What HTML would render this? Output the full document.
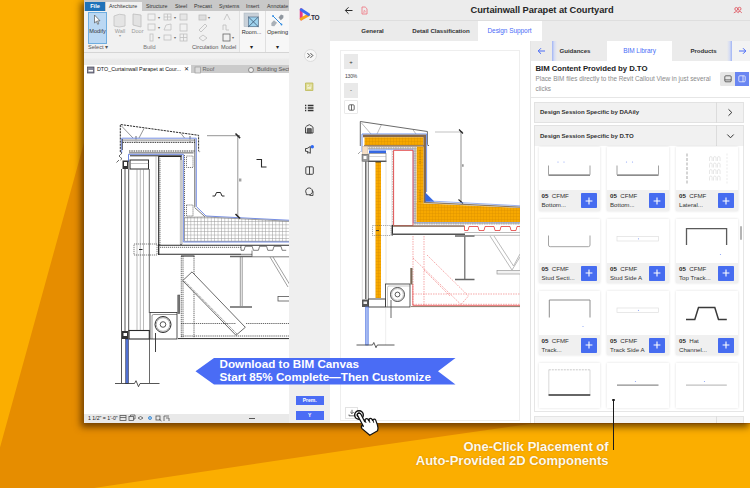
<!DOCTYPE html>
<html><head><meta charset="utf-8">
<style>
*{box-sizing:border-box;margin:0;padding:0}
html,body{width:750px;height:488px;overflow:hidden}
body{position:relative;background:#fbae00;font-family:"Liberation Sans",sans-serif;color:#222}
#bg{position:absolute;left:0;top:0}
#shot{position:absolute;left:84px;top:0;width:666px;height:423px;background:#fff;box-shadow:-2px 3px 7px 1px rgba(70,35,0,.75);overflow:hidden}
#pg{position:absolute;left:-84px;top:0;width:750px;height:423px}
#pg div,#pg svg,#pg span{position:absolute}
.t{white-space:nowrap;line-height:1}
.c{transform:translateX(-50%)}
/* revit ribbon */
.rt{font-size:5.3px;color:#333;top:3.7px}
.rg{font-size:5.6px;color:#9a9a9a}
.rl{font-size:5.6px;color:#555}
.bn{font-size:11.68px;font-weight:bold;color:#fff}
.co{font-size:13px;font-weight:bold;color:#fffaeb;text-shadow:0 0 1.500px rgba(150,80,0,.55)}
.cl{font-size:6.15px;color:#333}
.cl b{color:#222}
.sub{font-size:6.35px;color:#8a8a8a}
.ac{font-size:6.08px;font-weight:bold;color:#333;letter-spacing:-.05px}
.tb{font-size:6.15px;color:#333;font-weight:bold;letter-spacing:-.05px}
</style></head><body>
<svg id="bg" width="750" height="488" viewBox="0 0 750 488">
<polygon points="90.300,120 0,447.500 0,488 94,488 375,446 530,424 750,424 750,120" fill="#e68d00"/>
</svg>
<div id="shot"><div id="pg">

<!-- ================= REVIT ================= -->
<div id="rv" style="left:84px;top:0;width:205px;height:423px;background:#fff;overflow:hidden"></div>
<div style="left:84px;top:0;width:205px;height:11px;background:#c8c8c8"></div>
<div style="left:85px;top:1.5px;width:19.5px;height:9.5px;background:#1f72b9"></div>
<div class="t c" style="left:95px;top:3.5px;font-size:5.6px;color:#fff;font-weight:bold">File</div>
<div style="left:106px;top:1.5px;width:36px;height:10px;background:#f1f1f1"></div>
<div class="t rt" style="left:109px">Architecture</div>
<div class="t rt" style="left:146px">Structure</div>
<div class="t rt" style="left:175px">Steel</div>
<div class="t rt" style="left:194px">Precast</div>
<div class="t rt" style="left:219px">Systems</div>
<div class="t rt" style="left:246px">Insert</div>
<div class="t rt" style="left:267px">Annotate</div>
<div style="left:84px;top:11px;width:205px;height:41.5px;background:#f1f1f1;border-bottom:1px solid #d5d5d5"></div>
<div style="left:84px;top:52.5px;width:205px;height:12.500px;background:linear-gradient(#f1f1f1,#f1f1f1 40%,#e9e9e9 60%,#e9e9e9)"></div>
<!-- modify -->
<div style="left:88px;top:12px;width:19px;height:32px;background:#bbd8f3;border:.7px solid #6faee0"></div>
<svg style="left:92px;top:14px" width="10" height="12" viewBox="0 0 10 12"><path d="M2.5 1 L2.5 9 L4.4 7.3 L5.7 10.3 L6.8 9.8 L5.5 6.9 L8 6.8 Z" fill="#fff" stroke="#555" stroke-width=".7"/></svg>
<div class="t c rl" style="left:97.5px;top:29px;color:#333">Modify</div>
<div class="t rl" style="left:88px;top:45px">Select ▾</div>
<!-- wall / door greyed -->
<svg style="left:112px;top:13px" width="34" height="16" viewBox="0 0 34 16"><path d="M2 3 Q7 0 13 2 L13 13 Q7 15 2 13 Z" fill="#e4e4e4" stroke="#c2c2c2" stroke-width=".8"/><path d="M21 1 L29 2 L29 14 L21 12 Z" fill="#e2e2e2" stroke="#bdbdbd" stroke-width=".8"/></svg>
<div class="t c rg" style="left:120px;top:29px">Wall</div>
<div class="t c rg" style="left:120px;top:34px;font-size:4px">▾</div>
<div class="t c rg" style="left:137.5px;top:29px">Door</div>
<svg style="left:146px;top:12px" width="46" height="32" viewBox="146 12 46 32" fill="none" stroke="#c0c0c0" stroke-width=".8">
<rect x="148" y="14" width="7" height="6"/><rect x="148" y="24" width="7" height="6"/><rect x="150" y="34" width="3" height="7"/>
<rect x="164" y="14" width="7" height="6"/><path d="M164 30 L171 30 L171 24 L166 25Z"/><rect x="164" y="35" width="7" height="5"/>
<rect x="180" y="14" width="7" height="6" fill="#e6e6e6"/><rect x="180" y="24" width="7" height="7"/><rect x="180" y="34" width="7" height="7"/><path d="M183.500 34v7M180 37.500h7M167.500 14v6M164 17h7"/>
</svg>
<div class="t rg" style="left:158px;top:16px;font-size:4px;color:#666">▾</div>
<div class="t rg" style="left:158px;top:26px;font-size:4px;color:#666">▾</div>
<div class="t rg" style="left:158px;top:36px;font-size:4px;color:#666">▾</div>
<div class="t rg" style="left:174px;top:16px;font-size:4px;color:#666">▾</div>
<div class="t rg" style="left:174px;top:36px;font-size:4px;color:#666">▾</div>
<div class="t c rl" style="left:149.500px;top:45px;color:#777">Build</div>
<!-- circulation / model -->
<svg style="left:196px;top:12px" width="40" height="32" viewBox="196 12 40 32" fill="none" stroke="#bdbdbd" stroke-width=".8">
<rect x="199" y="15" width="7" height="5" fill="#dedede"/><path d="M199 30 L205 24 L207 26 L201 32Z"/><path d="M199 38 L203 35 L207 38 L203 41Z"/>
<path d="M224 20 L227 14 L230 20 M223 30 v-5 h3 v5 h3"/><rect x="223" y="34" width="7" height="7" stroke="#666"/>
</svg>
<div class="t rg" style="left:208px;top:16px;font-size:4px;color:#666">▾</div>
<div class="t rg" style="left:232px;top:36px;font-size:4px;color:#666">▾</div>
<div class="t rl" style="left:192px;top:45px;color:#555">Circulation</div>
<div class="t rl" style="left:221px;top:45px;color:#555">Model</div>
<div style="left:238.500px;top:11px;width:26px;height:41px;background:#f7f7f7;border-left:1px solid #e0e0e0"></div>
<div style="left:265px;top:11px;width:24px;height:41px;background:#f7f7f7;border-left:1px solid #e0e0e0"></div>
<!-- room -->
<svg style="left:243px;top:12px" width="18" height="17" viewBox="243 12 18 17"><rect x="244" y="13" width="14.300" height="13.700" fill="#c9d1d9" stroke="#a9b3bd" stroke-width=".5"/><rect x="248.500" y="17" width="9.800" height="9.700" fill="#9fd3ee" stroke="#56708a" stroke-width=".7"/><path d="M248.500 17L258.300 26.700M258.300 17L248.500 26.700" stroke="#3d566e" stroke-width=".8"/></svg>
<div class="t c rl" style="left:251.500px;top:29.700px;color:#2a2a2a">Room...</div>
<div class="t c rl" style="left:251.500px;top:45px;font-size:5.500px;color:#222">▾</div>
<!-- opening -->
<svg style="left:270px;top:12px" width="17" height="17" viewBox="270 12 17 17"><path d="M278.500 17.500L281 14.500L283.500 15.500L283.300 18L280.800 20.300Z" fill="#8f979f"/><path d="M271.300 23L274 20.200L277 22.800L274.300 26.300L271.500 26Z" fill="#aab1b8"/><path d="M273 16L281.500 24.500" stroke="#2d8ae0" stroke-width="1"/><circle cx="273" cy="16" r=".9" fill="#2d8ae0"/><circle cx="281.500" cy="24.500" r=".9" fill="#2d8ae0"/></svg>
<div class="t c rl" style="left:277.500px;top:29.700px;color:#2a2a2a">Opening</div>
<div class="t c rl" style="left:277.500px;top:45px;font-size:5.500px;color:#222">▾</div>
<!-- view tabs -->
<div style="left:84px;top:64.800px;width:205px;height:8.500px;background:#cbcbcb"></div>
<div style="left:84px;top:64.800px;width:106.500px;height:8.500px;background:#fff"></div>
<svg style="left:87px;top:65.500px" width="8" height="8" viewBox="0 0 8 8"><rect x=".5" y="1" width="6.500" height="6" fill="#889" stroke="#445" stroke-width=".7"/><rect x="1.500" y="4" width="4.500" height="1.500" fill="#fff"/></svg>
<div class="t" style="left:97px;top:66.900px;font-size:5.350px;color:#111" id="vt">DTO_Curtainwall Parapet at Cour...</div>
<div class="t" style="left:183.700px;top:66.700px;font-size:5.500px;color:#222">✕</div>
<svg style="left:193.500px;top:65.500px" width="8" height="8" viewBox="0 0 8 8"><rect x="1" y="1" width="5.500" height="6" fill="#ddd" stroke="#999" stroke-width=".7"/></svg>
<div class="t" style="left:202.500px;top:66.900px;font-size:5.600px;color:#666">Roof</div>
<svg style="left:247px;top:65.500px" width="8" height="8" viewBox="0 0 8 8"><circle cx="4" cy="4" r="2.500" fill="#eee" stroke="#777" stroke-width=".8"/></svg>
<div class="t" style="left:257px;top:66.900px;font-size:5.600px;color:#555">Building Section</div>
<!-- status bar -->
<div style="left:84px;top:413.500px;width:205px;height:9.500px;background:#e9e9e9"></div>
<div class="t" style="left:88px;top:415.500px;font-size:5.200px;color:#222">1 1/2" = 1'-0"</div>
<svg style="left:119px;top:414px" width="54" height="9" viewBox="119 414 54 9" fill="none" stroke="#555" stroke-width=".8"><rect x="120" y="415.500" width="6" height="5"/><path d="M120 417.500h6"/><rect x="129" y="416.500" width="4.500" height="4"/><path d="M130.500 416.500v-1.500h4.500v4h-1.500"/><path d="M138 418 q2.500 -3 5 0 q-2.500 3 -5 0"/><circle cx="150" cy="418" r="1.500" stroke="#2d7cc4" fill="#9cf"/><rect x="156" y="416" width="4" height="4"/><path d="M159 419 l2.500 2"/><path d="M164 421v-5h5M166 418h3v3"/></svg>
<div style="left:249px;top:417.500px;width:6px;height:1.200px;background:#555"></div>
<svg id="rvd" style="left:84px;top:76px" width="205" height="338" viewBox="84 76 205 338" fill="none" stroke="#2a2a2a" stroke-width=".8">
<defs>
<pattern id="gh" width="3.4" height="3.4" patternUnits="userSpaceOnUse"><path d="M0 .4H3.4M.4 0V3.4" stroke="#999" stroke-width=".5"/></pattern>
</defs>
<!-- parapet cap dashed -->
<path d="M120.300 152V124.500L198.600 135.300V150.500q.3 2 1.600 .6" stroke-dasharray="2.200 .9" stroke-width="1"/>
<path d="M121.500 126L133 138M144 128.500L139 138M181 133.500L184.500 138" stroke-width=".5"/>
<path d="M136 136v5.500M190 136v6" stroke-width=".7"/>
<path d="M121.700 153V138.200H196.300V206.500L206 216L290 220.300" stroke="#6681e0" stroke-width=".9"/>
<rect x="122.500" y="139.300" width="72.500" height="2" fill="#b5b5b5" stroke="none"/>
<path d="M122.500 142.400H195" stroke-dasharray="1.500 .8" stroke-width=".9"/>
<path d="M129 151H194.500" stroke-dasharray="1.500 .8" stroke-width=".9"/>
<path d="M122.400 139v11M194.800 139v68" stroke-width=".7"/>
<rect x="129" y="152" width="64.500" height="1.600" fill="#9a9a9a" stroke="none"/>
<path d="M128.500 162V154.300H183.300V240" stroke="#5a78e0" stroke-width=".9"/>
<path d="M130 155.800H182" stroke-width="1"/>
<path d="M120.500 152q3 1 0 2.500q-3 1.500 0 3q3 1 0 2.500M119 160l-2.500 2.500" stroke-width=".7"/>
<!-- head box -->
<rect x="130" y="160" width="18.500" height="9" stroke-width="1"/>
<path d="M130 163.500h18.500" stroke-width=".5" stroke="#888"/>
<rect x="122.500" y="160.500" width="6" height="8.500" fill="#333" stroke="none"/>
<rect x="124" y="162" width="3" height="4" fill="#fff" stroke="none"/>
<!-- mullion verticals -->
<path d="M121.500 169V383M125 169V331M128.700 169V331" stroke-width=".8"/>
<path d="M137 169V330M140.300 169V330M143.500 169V330" stroke-width=".5" stroke="#777"/>
<path d="M149.300 169V313M149.500 339V383" stroke-width=".7"/>
<path d="M156 156V245" stroke-width=".5" stroke="#888"/>
<!-- stud cavity -->
<path d="M158.700 245V156.500H181V245" stroke-width="1.100"/>
<path d="M160 245V158.500" stroke-dasharray="1.200 .8" stroke-width=".6"/>
<rect x="179.800" y="160" width="3" height="84" fill="#c9c9c9" stroke="none"/>
<path d="M184.500 155V217" stroke-dasharray="1.200 .8" stroke-width=".7"/>
<path d="M186.500 156h6.500v11.500h-6.500zM186.500 205h6.500v11h-6.500z" stroke-dasharray="1.200 .8" stroke-width=".6"/>
<path d="M194.500 207.500L205 216.800" stroke-width=".6"/>
<!-- dimension -->
<path d="M207 135.700H240M237.800 135.700V216.500" stroke-width=".5"/>
<path d="M235.500 133.500l4.600 4.600M235.500 214l4.600 4.600" stroke-width="1.500"/>
<path d="M239.500 180l2 0" stroke-width="3" stroke="#444" stroke-dasharray=".6 .5"/>
<!-- symbols -->
<path d="M256.500 159.500h5v7.500h5" stroke-width="1.100"/>
<path d="M212.500 196h2.500l1.500-3.500h4l1.500 3.500h2.500" stroke-width="1"/>
<!-- roof insulation -->
<path d="M184.500 217.300L206 217L290 221.300V241.300H184.500Z" fill="url(#gh)" stroke="#666" stroke-width=".6"/>
<path d="M183.300 240V242H290" stroke="#5a78e0" stroke-width=".8"/>
<!-- deck -->
<path d="M158.500 245.300H290M158.500 254.300H241" stroke-width="1.100"/>
<path d="M158.700 244V255" stroke-width="1.300"/>
<path d="M160 247.300H241" stroke-dasharray="1.200 .8" stroke-width=".7"/>
<path d="M241 245.300v5h3l1.200-4h7l1.200 4h5l1.200-4h7l1.200 4h5l1.200-4h7l1.200 4h4" stroke-width=".6"/>
<path d="M241 254.300h11v2.500h38M252 250.500v4" stroke-width=".6"/>
<rect x="134" y="244" width="23" height="11" stroke-dasharray="1.200 .8" stroke-width=".6"/>
<path d="M139 249.500h3.500" stroke-width="1"/>
<!-- column dashed -->
<path d="M181.300 256V338M194 256V338M183 256V338" stroke-dasharray="1.300 .8" stroke-width=".7"/>
<path d="M181 256h13.500" stroke-width="1.100"/>
<!-- brace -->
<path d="M182.700 280.700L192 271.900L245.300 327.300L236 335.300Z" fill="#fff" stroke-width=".7"/>
<path d="M184.500 281L237 334" stroke-dasharray="1.300 .8" stroke-width=".6"/>
<!-- I beam -->
<path d="M230 256.500h22M230 307h22" stroke="#666" stroke-width="1.600"/>
<path d="M240.300 257V306M242.200 257V306" stroke="#555" stroke-width=".6"/>
<!-- truss -->
<path d="M270 257L288 287M273 257L290 285" stroke="#777" stroke-width=".7"/>
<rect x="278" y="296.500" width="12" height="4.500" stroke="#555" stroke-width=".8"/>
<!-- frame horizontals -->
<path d="M181 323.500H236M246 323.500H290M181 336H290" stroke-dasharray="1.300 .8" stroke-width=".7"/>
<path d="M178 338.600H290" stroke-width="1"/>
<!-- roller -->
<rect x="150" y="312.500" width="27" height="26.500" stroke-width=".8"/>
<path d="M152 339V316q0-1.500 1.500-1.500H177" stroke-width=".5"/>
<circle cx="163" cy="324.500" r="8" stroke-width="1"/><circle cx="163" cy="324.500" r="6.800" stroke-width=".4"/><circle cx="163" cy="324.500" r="2.800" stroke-width=".8"/>
<path d="M155.500 333V352" stroke-width=".9"/>
<rect x="177.800" y="295" width="2" height="18.500" fill="#777" stroke="#444" stroke-width=".5"/>
<!-- sill -->
<rect x="129" y="330.500" width="20.300" height="8.500" stroke-width="1.100"/>
<rect x="122" y="331" width="6.500" height="8" fill="#333" stroke="none"/>
<rect x="123.500" y="333" width="3.500" height="3" fill="#fff" stroke="none"/>
<rect x="125.700" y="339" width="2.800" height="44.500" fill="#4f6fd0" stroke="#223" stroke-width=".5"/>
<path d="M115 383.500H134.500l1.500-2.800l2.500 6l1.500-3.200H159.500" stroke-width=".8"/>
</svg>

<!-- ================= SIDEBAR ================= -->
<div id="sb" style="left:289px;top:0;width:41px;height:423px;background:#efefef"></div>
<svg style="left:298px;top:6px" width="14" height="17" viewBox="298 6 14 17" fill="none" stroke-width="2.900" stroke-linecap="round" stroke-linejoin="round">
<path d="M301.200 9.800V19" stroke="#e8388a"/>
<path d="M301.200 19L308.600 14.900" stroke="#f7a21b"/>
<path d="M301.200 9.800L308.600 14.400" stroke="#3b6cf0"/>
</svg>
<div class="t" style="left:309.300px;top:15.400px;font-size:6.500px;font-weight:bold;color:#2a2a3a;letter-spacing:-.2px">.TO</div>
<div style="left:303.500px;top:49px;width:13px;height:13px;border-radius:50%;background:#f7f7f7;border:.8px solid #dcdcdc"></div>
<svg style="left:306px;top:52px" width="8" height="7" viewBox="0 0 8 7" fill="none" stroke="#333" stroke-width=".9"><path d="M1.500 1.200L3.800 3.500L1.500 5.800M4.500 1.200L6.800 3.500L4.500 5.800"/></svg>
<!-- icons -->
<svg style="left:300px;top:78px" width="20" height="124" viewBox="300 78 20 124" fill="none" stroke="#333" stroke-width=".9" stroke-linejoin="round">
<rect x="305.500" y="83" width="7.400" height="7.500" fill="#dcd98e" stroke="#bdb955" stroke-width=".8"/><path d="M307 85.200h2M310.500 85.200h1M307 87h1M309.500 87h2M307.500 88.800l.8-1.500.8 1.500.8-1.500.8 1.500" stroke="#fff" stroke-width=".7"/>
<path d="M307.800 105.500h5.700M307.800 108h5.700M307.800 110.500h5.700" stroke-width="1.300"/><path d="M305 105.500h1.300M305 108h1.300M305 110.500h1.300" stroke-width="1.300"/>
<path d="M305.500 133V127.800Q305.500 126.800 306.500 126.200L309.300 124.700L312 126.200Q313 126.800 313 127.800V133Z" stroke-width=".9"/><path d="M307.300 133V128.600h4V133Z" fill="#666" stroke-width=".7"/>
<path d="M305.500 148.500v2.800h1.600l3.200 2V146.500l-3.200 2Z" stroke-width=".9"/><path d="M307.300 151.500l.6 2.300" stroke-width=".8"/><circle cx="312.300" cy="146.800" r="1.700" fill="#2f6af5" stroke="none"/>
<rect x="305.800" y="166.800" width="7.500" height="7.500" rx="1" stroke-width=".9"/><path d="M309.500 166.800v7.500" stroke-width=".9"/>
<path d="M306.300 193.300A3.400 3.400 0 1 1 308.500 194.700H306.300Z" stroke-width=".9"/><path d="M309.500 195.500h3.500V193.300A2.600 2.600 0 0 0 312.300 190.500" stroke-width=".8"/>
</svg>
<!-- prem buttons -->
<div style="left:296px;top:396px;width:27.500px;height:8.500px;background:#4b6df5"></div>
<div class="t c" style="left:309.700px;top:398px;font-size:5px;font-weight:bold;color:#fff">Prem.</div>
<div style="left:296px;top:411px;width:27.500px;height:8.500px;background:#4b6df5"></div>
<div class="t c" style="left:309.700px;top:413px;font-size:5px;font-weight:bold;color:#fff">Y</div>

<!-- ================= MAIN ================= -->
<div id="mn" style="left:330px;top:0;width:420px;height:423px;background:#fff"></div>
<div style="left:330px;top:0;width:420px;height:21px;background:#ececec;border-bottom:.8px solid #dedede"></div>
<div style="left:330px;top:21px;width:420px;height:19.500px;background:#ebebeb"></div>
<svg style="left:344px;top:6px" width="10" height="9" viewBox="0 0 10 9" fill="none" stroke="#2a2a2a" stroke-width="1"><path d="M8.500 4.500H1.500M4.500 1.300L1.300 4.500L4.500 7.700"/></svg>
<svg style="left:361px;top:6px" width="7" height="9" viewBox="0 0 7 9" fill="none" stroke="#f0707c" stroke-width=".8"><path d="M1 1h3.200L6 2.800V8H1Z"/><path d="M2.500 6.500q1-3 1-2.500q0 1 1 2q-1 0-2 .5" stroke-width=".5"/></svg>
<div class="t" id="ttl" style="left:470.500px;top:5.500px;font-size:9.300px;font-weight:bold;color:#262626;letter-spacing:-.05px">Curtainwall Parapet at Courtyard</div>
<svg style="left:733px;top:6px" width="10" height="8" viewBox="0 0 10 8" fill="none" stroke="#dd4a55" stroke-width=".8"><circle cx="3.300" cy="3" r="1.500"/><circle cx="6.500" cy="2.800" r="1.500"/><path d="M.8 6.800q2.500-2.600 5 0M5.300 5.600q1.800-1.200 3.500 1.200"/></svg>
<div class="t c tb" style="left:372.500px;top:28px">General</div>
<div class="t c tb" style="left:441px;top:28px">Detail Classification</div>
<div style="left:478px;top:21px;width:63.500px;height:19.500px;background:#fff"></div>
<div class="t c tb" id="ds" style="left:509.500px;top:28px;color:#4a6cf7;font-weight:normal;font-size:6.500px">Design Support</div>
<!-- canvas panel -->
<div style="left:340.400px;top:50.400px;width:179.600px;height:371px;background:#fff;border:.8px solid #eeeeee"></div>
<div style="left:344.200px;top:54.200px;width:13.800px;height:15.200px;background:#e9e9e9"></div>
<div class="t c" style="left:351px;top:59px;font-size:6px;color:#333">+</div>
<div class="t c" style="left:351px;top:73.600px;font-size:5px;color:#444;letter-spacing:-.15px">130%</div>
<div style="left:344.200px;top:82.700px;width:13.800px;height:15.300px;background:#e9e9e9"></div>
<div class="t c" style="left:351px;top:87px;font-size:6px;color:#333">-</div>
<div style="left:344.200px;top:100.400px;width:13.800px;height:13.800px;background:#fff;border:.8px solid #e9e9e9;border-radius:1px"></div>
<svg style="left:347.600px;top:103.800px" width="7" height="7" viewBox="0 0 7 7" fill="none" stroke="#444" stroke-width=".8"><rect x=".8" y=".8" width="5.400" height="5.400" rx="1"/><path d="M3.500 .8v5.400"/></svg>
<svg id="cvd" style="left:342px;top:115px" width="177.500" height="240" viewBox="342 115 177.500 240" fill="none" stroke="#333" stroke-width=".7">
<defs>
<pattern id="oh" width="3" height="3" patternUnits="userSpaceOnUse"><rect width="3" height="3" fill="#f7a800" stroke="none"/><path d="M0 .3H3M.3 0V3" stroke="#d68c00" stroke-width=".45"/></pattern>
<pattern id="sh" width="2.400" height="2.400" patternUnits="userSpaceOnUse"><rect width="2.400" height="2.400" fill="#a8a8a8" stroke="none"/><rect x=".5" y=".5" width="1.300" height="1.300" fill="#f4f4f4" stroke="none"/></pattern>
</defs>
<!-- cap outline -->
<path d="M360.300 146V121.500L427.400 131.500V144.500q.4 2 1.600 .7" stroke="#444" stroke-width=".8"/>
<path d="M361.500 123L371 134M381.500 124.500L377 134M413 129.800L416 134" stroke="#666" stroke-width=".45"/>
<path d="M358 154l2.500-2.500" stroke="#666" stroke-width=".6"/>
<!-- blue membrane outer -->
<path d="M362 152V134H426.600V192" stroke="#5f86ea" stroke-width=".9"/>
<rect x="363" y="134.600" width="63" height="2.700" fill="#86694c" stroke="none"/>
<rect x="364.500" y="137.300" width="59" height="7.900" fill="url(#oh)" stroke="none"/>
<rect x="423.500" y="137" width="2.500" height="66" fill="#86694c" stroke="none"/>
<rect x="364" y="145.200" width="60" height="1.400" fill="#86694c" stroke="none"/>
<!-- vertical orange -->
<rect x="416.500" y="146.600" width="7" height="57" fill="url(#oh)" stroke="none"/>
<path d="M420 150v14M420 190v12" stroke="#9a6a10" stroke-width=".7" stroke-dasharray="1.200 1"/>
<!-- sheathing -->
<rect x="368" y="147" width="48.500" height="2.300" fill="url(#sh)" stroke="none"/>
<rect x="413.700" y="147" width="2.600" height="77" fill="url(#sh)" stroke="none"/>
<path d="M368.500 149.600H413.300V223" stroke="#6d8fe8" stroke-width=".6"/>
<!-- peach box / head -->
<rect x="362.300" y="146.300" width="5.500" height="8" fill="#f6dfc6" stroke="#c9b8a3" stroke-width=".5"/>
<rect x="369" y="150.500" width="17" height="2.800" fill="#3568e3" stroke="none"/>
<rect x="369" y="153.600" width="17" height="7.400" fill="#fff" stroke="#777" stroke-width=".6"/>
<path d="M369 156.500h17" stroke="#aaa" stroke-width=".5"/>
<path d="M368 161.300h18.500" stroke="#333" stroke-width="1"/>
<rect x="362" y="154.300" width="6.500" height="7" fill="#999" stroke="#555" stroke-width=".5"/>
<rect x="363.500" y="156" width="3" height="3" fill="#fff" stroke="none"/>
<!-- mullion -->
<path d="M365.800 161.500V299" stroke="#555" stroke-width="1.300"/>
<path d="M368.300 161.500V299" stroke="#555" stroke-width=".8"/>
<path d="M362.300 161.500V299" stroke="#bbb" stroke-width=".5"/>
<path d="M386 161.500V284M391.800 150V226" stroke="#d5d5d5" stroke-width=".6"/>
<rect x="375.500" y="162" width="5.500" height="136" fill="url(#oh)" stroke="none"/>
<path d="M375.500 162h5.500" stroke="#333" stroke-width=".8"/>
<!-- stud cavity red -->
<path d="M393.600 225.500V150.300H413V225.500Z" stroke="#e23b3b" stroke-width=".9"/>
<path d="M392.700 151V225" stroke="#a88" stroke-width=".6" stroke-dasharray="1.500 1"/>
<!-- dimension -->
<path d="M435 132H463" stroke="#999" stroke-width=".6"/><path d="M461 131V203" stroke="#444" stroke-width=".6"/>
<path d="M459 129.500l4 4M458.500 199.500l4.500 4" stroke="#222" stroke-width="1.100"/>
<path d="M462 165.500h1.800" stroke="#555" stroke-width="2.500" stroke-dasharray=".5 .4"/>
<!-- cant + roof -->
<path d="M425.300 192.500V201.800H434.500Z" fill="#3568e3" stroke="none"/>
<path d="M416.500 203L520 208V222.300H416.500Z" fill="url(#oh)" stroke="none"/>
<path d="M424 202.300L520 207.200" stroke="#8a7a66" stroke-width="1.300"/>
<path d="M430 201L520 205.800" stroke="#6d8fe8" stroke-width=".7"/>
<rect x="414" y="222.300" width="106" height="2.300" fill="url(#sh)" stroke="none"/>
<path d="M414 222.500H520" stroke="#6d8fe8" stroke-width=".5"/>
<!-- deck -->
<rect x="392" y="225.300" width="72.500" height="1.500" fill="#8a7060" stroke="none"/>
<path d="M392.300 225V235.500" stroke="#333" stroke-width="1.400"/>
<path d="M392 234.300H465" stroke="#555" stroke-width="1.500"/>
<path d="M464.500 226v4.500h3.500l1-4h9l1 4h5l1-4h9l1 4h5l1-4h9l1 4h5l1-4h4" stroke="#e23b3b" stroke-width=".8"/>
<path d="M464.500 232.500H520M474 235.300H520" stroke="#aaa" stroke-width=".8"/>
<rect x="372.500" y="225.500" width="18.500" height="10" stroke="#555" stroke-width=".5" stroke-dasharray="1.200 .9"/>
<path d="M376 230.500h3" stroke="#333" stroke-width=".9"/>
<!-- column red dashed -->
<path d="M413 236V305M424 236V305" stroke="#f07070" stroke-width=".6" stroke-dasharray="1.500 1"/>
<path d="M413 258L461 304.500L468.500 296L427 255M424 270L450 296" stroke="#f07070" stroke-width=".6" stroke-dasharray="1.500 1"/>
<path d="M413 294H520M413 304.300H520" stroke="#f07070" stroke-width=".6" stroke-dasharray="1.500 1"/>
<path d="M412.500 305.400H520" stroke="#e23b3b" stroke-width=".7"/>
<path d="M411 306.600H520" stroke="#8a7a6a" stroke-width="1"/>
<path d="M412.800 284V305" stroke="#e23b3b" stroke-width=".7"/>
<!-- I beam -->
<path d="M455 236h19.500M455 279.500h19.500" stroke="#666" stroke-width="1.500"/>
<path d="M464.800 236.500V279" stroke="#666" stroke-width="1.200"/>
<!-- truss -->
<path d="M490 236L512 270L520 257M494 236L513.500 266L520 254" stroke="#aaa" stroke-width=".8"/>
<rect x="497" y="270.500" width="24" height="3.500" fill="#f2f2f2" stroke="#999" stroke-width=".7"/>
<!-- roller -->
<rect x="385.500" y="284" width="24.500" height="23" fill="#fff" stroke="#333" stroke-width=".8"/>
<path d="M387.500 307V287.500q0-1.500 1.500-1.500H410" stroke="#777" stroke-width=".4"/>
<circle cx="397.500" cy="294.500" r="7" stroke="#333" stroke-width=".9"/><circle cx="397.500" cy="294.500" r="5.800" stroke="#777" stroke-width=".4"/><circle cx="397.500" cy="294.500" r="2.400" stroke="#333" stroke-width=".8"/>
<path d="M391 300V318" stroke="#444" stroke-width=".8"/>
<rect x="410.300" y="268" width="2.200" height="16.500" fill="#7a6856" stroke="none"/>
<!-- sill -->
<rect x="368.500" y="299" width="17" height="8" fill="#fff" stroke="#333" stroke-width=".9"/>
<rect x="362" y="299.500" width="6.500" height="7.500" fill="#555" stroke="none"/>
<rect x="363.500" y="301.500" width="3.500" height="2.500" fill="#eee" stroke="none"/>
<rect x="365.700" y="307" width="2.500" height="38" fill="#a9bcf3" stroke="#5578e0" stroke-width=".7"/>
<path d="M385.700 307V345" stroke="#ddd" stroke-width=".5"/>
<path d="M356.500 345H372.500l1.300-2.500l2.200 5.200l1.300-2.700H394.500" stroke="#333" stroke-width=".8"/>
</svg>
<!-- download btn -->
<div style="left:345px;top:407px;width:12.500px;height:11.500px;background:#fff;border:.8px solid #e2e2e2"></div>
<svg style="left:347.500px;top:409px" width="8" height="8" viewBox="0 0 8 8" fill="none" stroke="#444" stroke-width=".8"><path d="M4 .8v3.700M2.300 3L4 4.700L5.700 3M1 5.500v1.300h6V5.500"/></svg>

<!-- ================= RIGHT PANEL ================= -->
<div style="left:530px;top:40.500px;width:220px;height:383px;background:#fff;border-left:.8px solid #e4e4e4"></div>
<div style="left:530.500px;top:41px;width:219.500px;height:19.500px;background:#ebebeb"></div>
<div style="left:551.500px;top:41px;width:5px;height:19.500px;background:linear-gradient(90deg,#9fb3f5,#d5dcf3 45%,#ebebeb)"></div>
<div style="left:727px;top:41px;width:5px;height:19.500px;background:linear-gradient(90deg,#ebebeb,#d5dcf3 55%,#9fb3f5)"></div>
<div style="left:732px;top:41px;width:18px;height:19.500px;background:#f3f3f3"></div>
<svg style="left:536.500px;top:47px" width="9" height="8" viewBox="0 0 9 8" fill="none" stroke="#4a6cf7" stroke-width="1"><path d="M8 4H1.300M4 1.200L1.200 4L4 6.800"/></svg>
<svg style="left:738px;top:47px" width="9" height="8" viewBox="0 0 9 8" fill="none" stroke="#4a6cf7" stroke-width="1"><path d="M1 4H7.700M5 1.200L7.800 4L5 6.800"/></svg>
<div class="t c tb" style="left:575px;top:48px">Guidances</div>
<div style="left:607px;top:41px;width:64.500px;height:19.500px;background:#fff"></div>
<div class="t c tb" id="bl" style="left:639.500px;top:48px;color:#4a6cf7;font-weight:normal;font-size:6.500px">BIM Library</div>
<div class="t c tb" style="left:703.500px;top:48px">Products</div>
<div class="t" id="h1" style="left:535.500px;top:65px;font-size:7.800px;font-weight:bold;color:#222;letter-spacing:-.05px">BIM Content Provided by D.TO</div>
<div class="t sub" id="s1" style="left:535.500px;top:76px">Place BIM files directly to the Revit Callout View in just several</div>
<div class="t sub" style="left:535.500px;top:85.500px">clicks</div>
<div style="left:720px;top:71.500px;width:15px;height:14px;background:#e6e6e6;border-radius:1.500px 0 0 1.500px"></div>
<div style="left:735px;top:71.500px;width:14.300px;height:14px;background:#6a86f2"></div>
<svg style="left:724px;top:75px" width="8" height="8" viewBox="0 0 8 8" fill="none" stroke="#333" stroke-width=".7"><rect x=".8" y=".8" width="6.400" height="6" rx="1"/><path d="M.8 4.900h6.400"/></svg>
<svg style="left:738.300px;top:75px" width="8" height="8" viewBox="0 0 8 8" fill="none" stroke="#fff" stroke-width=".7"><rect x=".8" y=".8" width="6.400" height="6" rx="1"/><path d="M5 .8v6"/></svg>
<div style="left:531px;top:97px;width:219px;height:.8px;background:#e6e6e6"></div>
<!-- accordions -->
<div style="left:534px;top:101.500px;width:209.500px;height:21px;background:#f1f1f1;border:.8px solid #e2e2e2"></div>
<div style="left:716px;top:101.500px;width:.8px;height:21px;background:#dcdcdc"></div>
<div class="t ac" id="a1" style="left:540px;top:109px">Design Session Specific by DAAily</div>
<svg style="left:726px;top:107.500px" width="8" height="9" viewBox="0 0 8 9" fill="none" stroke="#333" stroke-width="1"><path d="M2.500 1.300L5.800 4.500L2.500 7.700"/></svg>
<div style="left:534px;top:125px;width:209.500px;height:21.500px;background:#f1f1f1;border:.8px solid #e2e2e2"></div>
<div style="left:716px;top:125px;width:.8px;height:21.500px;background:#dcdcdc"></div>
<div class="t ac" style="left:540px;top:132.500px">Design Session Specific by D.TO</div>
<svg style="left:725.500px;top:132px" width="9" height="8" viewBox="0 0 9 8" fill="none" stroke="#333" stroke-width="1"><path d="M1.300 2.500L4.500 5.800L7.700 2.500"/></svg>
<!-- cards container -->
<div style="left:534px;top:146px;width:209.500px;height:265.500px;background:#fff;border:.8px solid #e6e6e6;border-top:none"></div>
<div id="cards" style="left:0;top:0;width:750px;height:423px"><div style="left:538.5px;top:146.5px;width:61.5px;height:64.3px;background:#fff;box-shadow:0 0 2.500px rgba(0,0,0,.13)"></div>
<div style="left:538.5px;top:190.2px;width:61.5px;height:20.600px;background:#f0f0f0"></div>
<div class="t cl" style="left:541.5px;top:193.1px"><b>05</b>&nbsp; CFMF</div>
<div class="t cl" style="left:541.5px;top:202.0px">Bottom...</div>
<div style="left:580.9px;top:193.2px;width:16px;height:15px;background:#466cf0;border-radius:.8px"></div>
<svg style="left:584.9px;top:196.7px" width="8" height="8" viewBox="0 0 8 8" stroke="#fff" stroke-width="1.100"><path d="M4 .6v6.800M.6 4h6.800"/></svg>
<div style="left:607px;top:146.5px;width:61.5px;height:64.3px;background:#fff;box-shadow:0 0 2.500px rgba(0,0,0,.13)"></div>
<div style="left:607px;top:190.2px;width:61.5px;height:20.600px;background:#f0f0f0"></div>
<div class="t cl" style="left:610px;top:193.1px"><b>05</b>&nbsp; CFMF</div>
<div class="t cl" style="left:610px;top:202.0px">Bottom...</div>
<div style="left:649.4px;top:193.2px;width:16px;height:15px;background:#466cf0;border-radius:.8px"></div>
<svg style="left:653.4px;top:196.7px" width="8" height="8" viewBox="0 0 8 8" stroke="#fff" stroke-width="1.100"><path d="M4 .6v6.800M.6 4h6.800"/></svg>
<div style="left:676px;top:146.5px;width:61.5px;height:64.3px;background:#fff;box-shadow:0 0 2.500px rgba(0,0,0,.13)"></div>
<div style="left:676px;top:190.2px;width:61.5px;height:20.600px;background:#f0f0f0"></div>
<div class="t cl" style="left:679px;top:193.1px"><b>05</b>&nbsp; CFMF</div>
<div class="t cl" style="left:679px;top:202.0px">Lateral...</div>
<div style="left:718.4px;top:193.2px;width:16px;height:15px;background:#466cf0;border-radius:.8px"></div>
<svg style="left:722.4px;top:196.7px" width="8" height="8" viewBox="0 0 8 8" stroke="#fff" stroke-width="1.100"><path d="M4 .6v6.800M.6 4h6.800"/></svg>
<div style="left:538.5px;top:219px;width:61.5px;height:64.3px;background:#fff;box-shadow:0 0 2.500px rgba(0,0,0,.13)"></div>
<div style="left:538.5px;top:262.7px;width:61.5px;height:20.600px;background:#f0f0f0"></div>
<div class="t cl" style="left:541.5px;top:265.6px"><b>05</b>&nbsp; CFMF</div>
<div class="t cl" style="left:541.5px;top:274.5px">Stud Secti...</div>
<div style="left:580.9px;top:265.7px;width:16px;height:15px;background:#466cf0;border-radius:.8px"></div>
<svg style="left:584.9px;top:269.2px" width="8" height="8" viewBox="0 0 8 8" stroke="#fff" stroke-width="1.100"><path d="M4 .6v6.800M.6 4h6.800"/></svg>
<div style="left:607px;top:219px;width:61.5px;height:64.3px;background:#fff;box-shadow:0 0 2.500px rgba(0,0,0,.13)"></div>
<div style="left:607px;top:262.7px;width:61.5px;height:20.600px;background:#f0f0f0"></div>
<div class="t cl" style="left:610px;top:265.6px"><b>05</b>&nbsp; CFMF</div>
<div class="t cl" style="left:610px;top:274.5px">Stud Side A</div>
<div style="left:649.4px;top:265.7px;width:16px;height:15px;background:#466cf0;border-radius:.8px"></div>
<svg style="left:653.4px;top:269.2px" width="8" height="8" viewBox="0 0 8 8" stroke="#fff" stroke-width="1.100"><path d="M4 .6v6.800M.6 4h6.800"/></svg>
<div style="left:676px;top:219px;width:61.5px;height:64.3px;background:#fff;box-shadow:0 0 2.500px rgba(0,0,0,.13)"></div>
<div style="left:676px;top:262.7px;width:61.5px;height:20.600px;background:#f0f0f0"></div>
<div class="t cl" style="left:679px;top:265.6px"><b>05</b>&nbsp; CFMF</div>
<div class="t cl" style="left:679px;top:274.5px">Top Track...</div>
<div style="left:718.4px;top:265.7px;width:16px;height:15px;background:#466cf0;border-radius:.8px"></div>
<svg style="left:722.4px;top:269.2px" width="8" height="8" viewBox="0 0 8 8" stroke="#fff" stroke-width="1.100"><path d="M4 .6v6.800M.6 4h6.800"/></svg>
<div style="left:538.5px;top:291px;width:61.5px;height:64.3px;background:#fff;box-shadow:0 0 2.500px rgba(0,0,0,.13)"></div>
<div style="left:538.5px;top:334.7px;width:61.5px;height:20.600px;background:#f0f0f0"></div>
<div class="t cl" style="left:541.5px;top:337.6px"><b>05</b>&nbsp; CFMF</div>
<div class="t cl" style="left:541.5px;top:346.5px">Track...</div>
<div style="left:580.9px;top:337.7px;width:16px;height:15px;background:#466cf0;border-radius:.8px"></div>
<svg style="left:584.9px;top:341.2px" width="8" height="8" viewBox="0 0 8 8" stroke="#fff" stroke-width="1.100"><path d="M4 .6v6.800M.6 4h6.800"/></svg>
<div style="left:607px;top:291px;width:61.5px;height:64.3px;background:#fff;box-shadow:0 0 2.500px rgba(0,0,0,.13)"></div>
<div style="left:607px;top:334.7px;width:61.5px;height:20.600px;background:#f0f0f0"></div>
<div class="t cl" style="left:610px;top:337.6px"><b>05</b>&nbsp; CFMF</div>
<div class="t cl" style="left:610px;top:346.5px">Track Side A</div>
<div style="left:649.4px;top:337.7px;width:16px;height:15px;background:#466cf0;border-radius:.8px"></div>
<svg style="left:653.4px;top:341.2px" width="8" height="8" viewBox="0 0 8 8" stroke="#fff" stroke-width="1.100"><path d="M4 .6v6.800M.6 4h6.800"/></svg>
<div style="left:676px;top:291px;width:61.5px;height:64.3px;background:#fff;box-shadow:0 0 2.500px rgba(0,0,0,.13)"></div>
<div style="left:676px;top:334.7px;width:61.5px;height:20.600px;background:#f0f0f0"></div>
<div class="t cl" style="left:679px;top:337.6px"><b>05</b>&nbsp; Hat</div>
<div class="t cl" style="left:679px;top:346.5px">Channel...</div>
<div style="left:718.4px;top:337.7px;width:16px;height:15px;background:#466cf0;border-radius:.8px"></div>
<svg style="left:722.4px;top:341.2px" width="8" height="8" viewBox="0 0 8 8" stroke="#fff" stroke-width="1.100"><path d="M4 .6v6.800M.6 4h6.800"/></svg>
<div style="left:538.5px;top:363px;width:61.5px;height:44.500px;background:#fff;box-shadow:0 0 2.500px rgba(0,0,0,.13)"></div>
<div style="left:607px;top:363px;width:61.5px;height:44.500px;background:#fff;box-shadow:0 0 2.500px rgba(0,0,0,.13)"></div>
<div style="left:676px;top:363px;width:61.5px;height:44.500px;background:#fff;box-shadow:0 0 2.500px rgba(0,0,0,.13)"></div>
<svg style="left:534px;top:146.500px" width="210" height="263" viewBox="534 146.500 210 263" fill="none"><path d="M548.5 165V174.300H590V165" stroke="#a2a2a2" stroke-width="1"/><path d="M548.5 174.800H590" stroke="#8c8c8c" stroke-width="1.200"/><circle cx="558" cy="161.5" r=".6" fill="#8aa2f5"/><circle cx="564" cy="161.5" r=".6" fill="#8aa2f5"/><path d="M617.0 165V174.300H658.5V165" stroke="#a2a2a2" stroke-width="1"/><path d="M617.0 174.800H658.5" stroke="#8c8c8c" stroke-width="1.200"/><circle cx="626.5" cy="161.5" r=".6" fill="#8aa2f5"/><circle cx="632.5" cy="161.5" r=".6" fill="#8aa2f5"/><path d="M687 153V184" stroke="#bdbdbd" stroke-width="1.300" stroke-dasharray="3 1.500"/><path d="M727 153V184" stroke="#e3e3e3" stroke-width=".7" stroke-dasharray="2 1.500"/><path d="M709.5 160.5v-3q0-1.500 1.300-1.500q1.300 0 1.300 1.500v3" stroke="#dcdcdc" stroke-width=".7"/><path d="M713.5 160.5v-3q0-1.500 1.300-1.500q1.300 0 1.300 1.500v3" stroke="#dcdcdc" stroke-width=".7"/><path d="M717.5 160.5v-3q0-1.500 1.300-1.500q1.300 0 1.300 1.500v3" stroke="#dcdcdc" stroke-width=".7"/><path d="M709.5 167.0v-3q0-1.500 1.300-1.500q1.300 0 1.300 1.500v3" stroke="#dcdcdc" stroke-width=".7"/><path d="M713.5 167.0v-3q0-1.500 1.300-1.500q1.300 0 1.300 1.500v3" stroke="#dcdcdc" stroke-width=".7"/><path d="M717.5 167.0v-3q0-1.500 1.300-1.500q1.300 0 1.300 1.500v3" stroke="#dcdcdc" stroke-width=".7"/><path d="M709.5 173.5v-3q0-1.500 1.300-1.500q1.300 0 1.300 1.500v3" stroke="#dcdcdc" stroke-width=".7"/><path d="M713.5 173.5v-3q0-1.500 1.300-1.500q1.300 0 1.300 1.500v3" stroke="#dcdcdc" stroke-width=".7"/><path d="M717.5 173.5v-3q0-1.500 1.300-1.500q1.300 0 1.300 1.500v3" stroke="#dcdcdc" stroke-width=".7"/><path d="M709.5 180.0v-3q0-1.500 1.300-1.500q1.300 0 1.300 1.500v3" stroke="#dcdcdc" stroke-width=".7"/><path d="M713.5 180.0v-3q0-1.500 1.300-1.500q1.300 0 1.300 1.500v3" stroke="#dcdcdc" stroke-width=".7"/><path d="M717.5 180.0v-3q0-1.500 1.300-1.500q1.300 0 1.300 1.500v3" stroke="#dcdcdc" stroke-width=".7"/><path d="M548.500 235V244.500q0 1.700 1.700 1.700H588.300q1.700 0 1.700-1.700V235" stroke="#9a9a9a" stroke-width=".9"/><rect x="617" y="236" width="41.500" height="4.500" stroke="#dedede" stroke-width=".7"/><circle cx="638.5" cy="238.3" r=".6" fill="#8aa2f5"/><path d="M686.500 244.600V228.200H726.600V244.600" stroke="#5a5a5a" stroke-width="1.300"/><circle cx="720.5" cy="254" r=".6" fill="#8aa2f5"/><path d="M549.300 317V299.500H590V317" stroke="#8e8e8e" stroke-width="1"/><circle cx="583" cy="326" r=".6" fill="#8aa2f5"/><rect x="617" y="307.500" width="41.500" height="4.500" stroke="#dedede" stroke-width=".7"/><circle cx="638.5" cy="309.8" r=".6" fill="#8aa2f5"/><path d="M686 319H694.800L698.500 307H714.800L718.500 319H726.800" stroke="#3a3a3a" stroke-width="1.500"/><path d="M548.800 394V369.300M590 369.300V394" stroke="#cfcfcf" stroke-width=".8"/><path d="M548.800 369.300H590" stroke="#bdbdbd" stroke-width=".8" stroke-dasharray="2 1"/><path d="M548.500 394.500H590.300" stroke="#333" stroke-width="1.300"/><path d="M617 384.600H658.500" stroke="#8c8c8c" stroke-width="1.100"/><circle cx="635.5" cy="381" r=".6" fill="#8aa2f5"/><path d="M686 384.600H726.800" stroke="#b0b0b0" stroke-width="1"/><circle cx="704.5" cy="381" r=".6" fill="#8aa2f5"/></svg></div>
<div style="left:740px;top:226px;width:2px;height:14px;background:#b5b5b5;border-radius:1px"></div>
<div style="left:534px;top:416px;width:209.500px;height:12px;background:#f4f4f4;border:.8px solid #e4e4e4"></div>
<div style="left:716px;top:416px;width:.8px;height:12px;background:#dedede"></div>

<!-- ================= OVERLAYS (inside shot) ================= -->
<svg style="left:190px;top:355px" width="270" height="34" viewBox="190 355 270 34"><path d="M195.500 371.200L214 358H455.500L438 371.200L455.500 384.400H214Z" fill="#4a6cf5"/></svg>
<div class="t bn" id="b1" style="left:219.500px;top:358.300px">Download to BIM Canvas</div>
<div class="t bn" id="b2" style="left:219.500px;top:370.500px">Start 85% Complete—Then Customize</div>

</div></div>
<!-- ================= OUTSIDE OVERLAYS ================= -->
<svg style="position:absolute;left:350px;top:405px" width="34" height="36" viewBox="350 405 34 36" fill="#fff" stroke="#111" stroke-width="1.200" stroke-linejoin="round">
<circle cx="359" cy="415" r="4.300" stroke-width="1.400"/>
<circle cx="359" cy="415" r="2.100" stroke-width="1"/>
<path d="M357.500 415.400Q357.200 413.300 358.900 413.200Q360.500 413.200 361.200 414.800L364.600 421.600L365 419.700Q366.500 418 368 419.300L368.700 420.800L369 419.200Q370.500 417.800 371.800 419L372.600 420.500L373 419.600Q374.600 418.400 375.600 419.900L377.300 424.500Q378.500 428 377.600 430.800L369.800 435.300L362 428.600Q360.600 426.700 362 425.400L363.400 426.300Z"/>
<path d="M365 419.700L366 423M369 419.200L369.900 422.800M373 419.600L373.700 422.800" fill="none" stroke-width=".9"/>
</svg>
<div style="position:absolute;left:612.800px;top:400px;width:1.100px;height:49.500px;background:#1a1a1a"></div>
<div style="position:absolute;left:612px;top:398.700px;width:2.600px;height:2.600px;border-radius:50%;background:#1a1a1a"></div>
<div class="t co" id="c1" style="position:absolute;right:141.400px;top:440px">One-Click Placement of</div>
<div class="t co" id="c2" style="position:absolute;right:141.400px;top:453.700px">Auto-Provided 2D Components</div>
</body></html>
